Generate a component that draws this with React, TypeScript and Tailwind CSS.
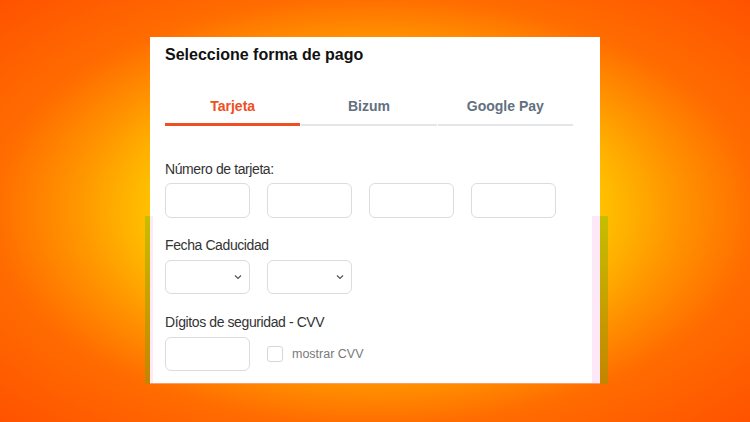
import { useState } from 'react';

const tabs = ['Tarjeta', 'Bizum', 'Google Pay'];

function Chevron() {
  return (
    <svg width="8" height="5" viewBox="0 0 8 5" className="absolute right-[7px] top-1/2 -translate-y-1/2">
      <polyline points="1,1 4,4 7,1" fill="none" stroke="#555" strokeWidth="1.2" />
    </svg>
  );
}

export default function App() {
  const [active, setActive] = useState(0);
  const [showCvv, setShowCvv] = useState(false);

  return (
    <div
      className="w-[750px] h-[422px] flex justify-center pt-[37px] bg-[radial-gradient(ellipse_at_center,#ffd200_0%,#ffc800_40%,#ff9400_57%,#ff6c00_72%,#ff5200_100%)]"
      style={{ fontFamily: '"Liberation Sans", Arial, sans-serif' }}
    >
      <div className="relative w-[450px] h-[347px] bg-white border-b border-[#ff9a6a] px-[15px] pt-[8px]">
        {/* pasted-strip artifacts along the lower half */}
        <div className="absolute left-[-5px] top-[179px] bottom-[-1px] w-[5px] bg-gradient-to-b from-[#c6be00] to-[#c48400]" />
        <div className="absolute left-0 top-[179px] bottom-0 w-[3px] bg-[#fde9f7]" />
        <div className="absolute right-0 top-[179px] bottom-0 w-[8px] bg-[#fde8f8]" />
        <div className="absolute right-[-8px] top-[179px] bottom-[-1px] w-[8px] bg-gradient-to-b from-[#c6be00] to-[#c48400]" />

        <h2 className="h-5 leading-5 text-[16px] font-bold text-[#111]">Seleccione forma de pago</h2>

        <div className="mt-[31px] w-[408px] flex gap-px">
          {tabs.map((t, i) => (
            <button key={t} onClick={() => setActive(i)} className="flex-1 flex flex-col">
              <span
                className={`h-5 leading-5 text-[14px] font-bold text-center ${
                  i === active ? 'text-[#f04e23]' : 'text-[#627080]'
                }`}
              >
                {t}
              </span>
              <span className="mt-[7px] h-[3px] flex items-end">
                <span className={`w-full ${i === active ? 'h-[3px] bg-[#f04e23]' : 'h-[2px] bg-[#e3e5e8]'}`} />
              </span>
            </button>
          ))}
        </div>

        <div className="text-[14px] text-[#333] tracking-[-0.4px]">
          <div className="mt-[33px] h-5 leading-5">Número de tarjeta:</div>
          <div className="mt-[4px] flex gap-[17px]">
            {[0, 1, 2, 3].map(n => (
              <input key={n} className="w-[85px] h-[35px] border border-[#dcdcdc] rounded-[6px] outline-none px-2" />
            ))}
          </div>

          <div className="mt-[17px] h-5 leading-5">Fecha Caducidad</div>
          <div className="mt-[5px] flex gap-[17px]">
            {[0, 1].map(n => (
              <div key={n} className="relative w-[85px] h-[34px] border border-[#dcdcdc] rounded-[6px]">
                <Chevron />
              </div>
            ))}
          </div>

          <div className="mt-[18px] h-5 leading-5">Dígitos de seguridad - CVV</div>
          <div className="mt-[5px] flex items-center">
            <input
              type={showCvv ? 'text' : 'password'}
              className="w-[85px] h-[34px] border border-[#dcdcdc] rounded-[6px] outline-none px-2"
            />
            <label className="ml-[17px] flex items-center gap-[9px] cursor-pointer">
              <span
                onClick={() => setShowCvv(!showCvv)}
                className="w-[16px] h-[16px] border border-[#d6d6d6] rounded-[3px] bg-white"
              />
              <span className="text-[12.5px] text-[#7a7a7a] tracking-normal">mostrar CVV</span>
            </label>
          </div>
        </div>
      </div>
    </div>
  );
}
